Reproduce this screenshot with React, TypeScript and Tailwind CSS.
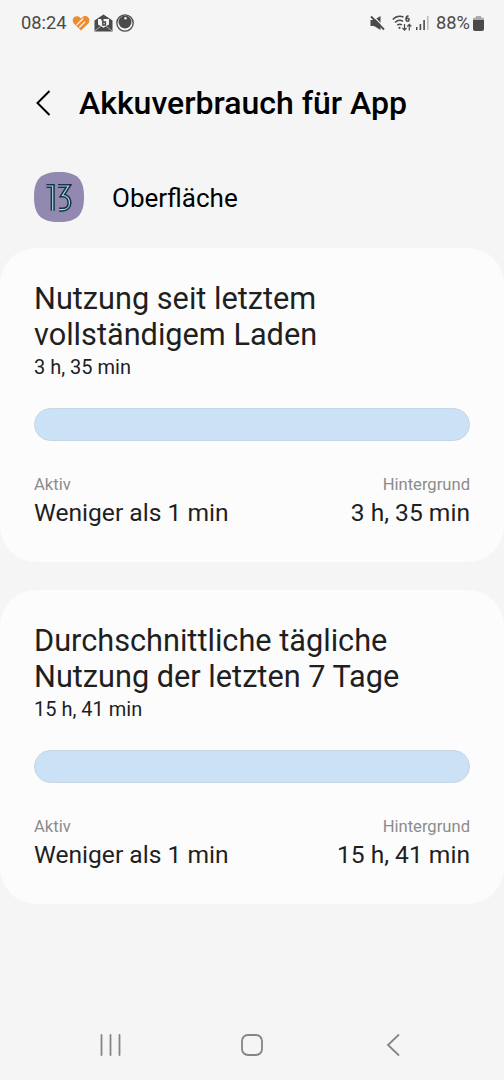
interface UsageCardProps {
  title: string[];
  total: string;
  active: string;
  background: string;
}

function UsageCard({ title, total, active, background }: UsageCardProps) {
  return (
    <section className="h-[314px] rounded-[36px] bg-[#fcfcfc] px-[34px] pt-[33px] text-[#1f1f1f]">
      <h2 className="text-[30.7px] leading-[36px] whitespace-nowrap">
        {title.map((line) => (
          <span key={line} className="block">{line}</span>
        ))}
      </h2>
      <p className="text-[20px] leading-[24px] mt-[2px]">{total}</p>
      <div className="mt-[29px] h-[33px] rounded-full border border-[#c8d6e3] bg-[#cbe1f6]" />
      <div className="mt-[33px] flex justify-between">
        <div>
          <div className="text-[16.6px] leading-[22px] text-[#8c8c8c]">Aktiv</div>
          <div className="text-[24.6px] leading-[30px] mt-[2px]">{active}</div>
        </div>
        <div className="text-right">
          <div className="text-[16.6px] leading-[22px] text-[#8c8c8c]">Hintergrund</div>
          <div className="text-[24.6px] leading-[30px] mt-[2px]">{background}</div>
        </div>
      </div>
    </section>
  );
}

function StatusBar() {
  return (
    <div className="h-[46px] pl-[21px] pr-[20px] flex items-center justify-between text-[#4a4a4a] text-[18.3px]">
      <div className="flex items-center">
        <span className="w-[51px]">08:24</span>
        <svg width="18" height="16" viewBox="0 0 18 16" fill="none">
          <path d="M9 15.500 2 8.700C.2 6.800.3 4 2 2.300c1.800-1.600 4.300-1.500 5.900.2L9 3.500l1.300-1.200c1.600-1.600 4.200-1.700 5.800-.1 1.800 1.700 1.800 4.600 0 6.500z" fill="#f08a2c" />
          <path d="M4.800 9.800 11 3.800M7.500 12.200l5.300-5.200" stroke="#f5f5f5" strokeWidth="1.200" strokeLinecap="round" />
        </svg>
        <svg className="ml-[4px]" width="19" height="18" viewBox="0 0 19 18">
          <path d="M.5 6.500 9.500.5l9 6V17.500H.5z" fill="#4a4a4a" />
          <path d="M4 5h11v5.500l-5.500 3.300L4 10.500z" fill="#f5f5f5" />
          <path d="M7.300 5.800h1.500v5.200h2.600V8H9" fill="none" stroke="#4a4a4a" strokeWidth="1.500" />
          <path d="m1 16.800 5.500-4.300M18 16.800l-5.500-4.300" stroke="#f5f5f5" strokeWidth=".6" />
        </svg>
        <svg className="ml-[3px]" width="18" height="18" viewBox="0 0 18 18">
          <circle cx="9" cy="9" r="8.200" fill="none" stroke="#4a4a4a" strokeWidth="1.300" />
          <circle cx="9" cy="8" r="6.500" fill="#4a4a4a" />
          <circle cx="9.500" cy="4.300" r="1.200" fill="#f5f5f5" />
        </svg>
      </div>
      <div className="flex items-center">
        <svg width="15" height="16" viewBox="0 0 15 16">
          <path d="M.5 5h3.500L10.500 1v14L4 11H.5z" fill="#4a4a4a" />
          <path d="M2.500.5 15 13" stroke="#f5f5f5" strokeWidth="1.200" />
          <path d="m1 1.500 13 13" stroke="#4a4a4a" strokeWidth="1.800" />
        </svg>
        <svg className="ml-[7px]" width="20" height="17" viewBox="0 0 20 17" fill="none" stroke="#4a4a4a" strokeWidth="1.500">
          <path d="M.7 4.500C4 1.200 8 .8 11.500 2M3 7.500c2.500-2.400 5.800-2.600 8-1.200M5.300 10.200c1.500-1.200 3.200-1.200 4.600-.3" />
          <circle cx="7.500" cy="12.800" r="1.100" fill="#4a4a4a" stroke="none" />
          <path d="M16.500.8c-2 .4-2.600 2-2.500 3.600" />
          <circle cx="15.600" cy="4.800" r="1.500" />
          <path d="M12.500 9v6m-2-2 2 2.200 2-2.200M17.300 15.500V9.500m-2 2 2-2.200 2 2.200" strokeWidth="1.200" />
        </svg>
        <svg className="ml-[4px]" width="13" height="14" viewBox="0 0 13 14" fill="#4a4a4a">
          <path d="M0 11h1.500v3H0zM3.600 8h1.600v6H3.600zM7.300 4h1.600v10H7.300z" />
          <path d="M11 0h1.600v14H11z" fill="#bdbdbd" />
        </svg>
        <span className="ml-[7px]">88%</span>
        <svg className="ml-[3px]" width="11" height="15" viewBox="0 0 11 15">
          <path d="M3 0h5v1.500h1.500q1.500 0 1.500 1.500v2H0V3q0-1.500 1.500-1.500H3z" fill="#ababab" />
          <path d="M0 4h11v9q0 2-2 2H2q-2 0-2-2z" fill="#4a4a4a" />
        </svg>
      </div>
    </div>
  );
}

function AppIcon() {
  return (
    <svg width="50" height="50" viewBox="0 0 50 50" fill="none">
      <path d="M25 0C43 0 50 7 50 25S43 50 25 50 0 43 0 25 7 0 25 0z" fill="#9388b0" />
      <g stroke="#173347" strokeWidth="4.200">
        <path d="M12.500 14H18.700V38.700" />
        <path d="M24 14H34.500L28.500 23.500C33 23.500 35.500 27 35.500 30.800 35.500 35 32.500 37.700 28.500 37.700H25" />
      </g>
      <g stroke="#a9d5e0" strokeWidth="1.200">
        <path d="M12.500 14H18.700V38.700" />
        <path d="M24 14H34.500L28.500 23.500C33 23.500 35.500 27 35.500 30.800 35.500 35 32.500 37.700 28.500 37.700H25" />
      </g>
    </svg>
  );
}

export default function App() {
  return (
    <div className="w-[504px] h-[1080px] flex flex-col overflow-hidden bg-[#f5f5f5] font-['Roboto',sans-serif] text-black">
      <StatusBar />
      <header className="h-[113px] pl-[36px] flex items-center">
        <svg width="15" height="26" viewBox="0 0 15 26" fill="none" stroke="#000" strokeWidth="2">
          <path d="M13.500 1 1.500 13l12 12" />
        </svg>
        <h1 className="ml-[28px] text-[32px] font-medium">Akkuverbrauch für App</h1>
      </header>
      <div className="h-[89px] pl-[34px] pt-[13px] flex items-start">
        <AppIcon />
        <span className="ml-[28px] text-[26px] leading-[52px]">Oberfläche</span>
      </div>
      <main className="flex flex-col gap-[28px]">
        <UsageCard
          title={['Nutzung seit letztem', 'vollständigem Laden']}
          total="3 h, 35 min"
          active="Weniger als 1 min"
          background="3 h, 35 min"
        />
        <UsageCard
          title={['Durchschnittliche tägliche', 'Nutzung der letzten 7 Tage']}
          total="15 h, 41 min"
          active="Weniger als 1 min"
          background="15 h, 41 min"
        />
      </main>
      <nav className="mt-auto h-[70px] pl-[100px] pr-[104px] flex items-center justify-between text-[#858585]">
        <svg width="21" height="22" viewBox="0 0 21 22" stroke="currentColor" strokeWidth="1.800" strokeLinecap="round">
          <path d="M1.500 1v20M10.500 1v20M19.500 1v20" />
        </svg>
        <svg className="mr-[4px]" width="22" height="22" viewBox="0 0 22 22" fill="none" stroke="currentColor" strokeWidth="1.800">
          <rect x="1" y="1" width="20" height="20" rx="6" />
        </svg>
        <svg width="14" height="22" viewBox="0 0 14 22" fill="none" stroke="currentColor" strokeWidth="1.800" strokeLinecap="round">
          <path d="M12.500 1 2 11l10.500 10" />
        </svg>
      </nav>
    </div>
  );
}
